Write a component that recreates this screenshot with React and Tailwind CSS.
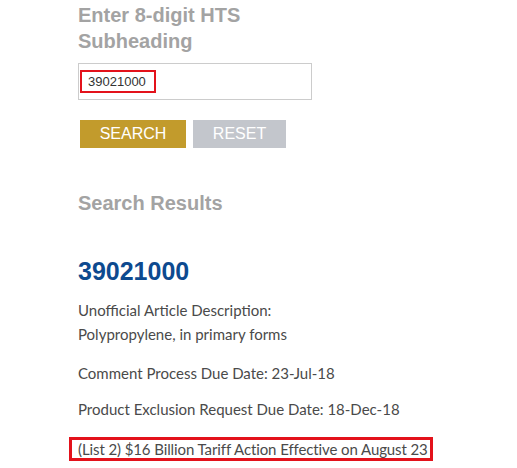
export default function App() {
    const body = "font-['Lato','Liberation_Sans',sans-serif] text-[15px] text-[#4a4a4a]";

    return (
        <div className="min-h-[468px] w-[517px] bg-white pl-[78px] pt-[2px]">
            <div className="w-[234px]">
                <h2 className="font-['Liberation_Sans',Arial,sans-serif] text-[20px] font-bold leading-[26px] text-[#a3a3a3]">
                    Enter 8-digit HTS Subheading
                </h2>
                <div className="mt-[9px] flex h-[37px] items-center border border-[#cccccc] bg-white">
                    <span className="ml-[1px] flex h-[23px] w-[76px] items-center border-2 border-[#e3121b] pl-[6px] font-['Liberation_Sans',Arial,sans-serif] text-[13px] text-[#333]">
                        39021000
                    </span>
                </div>
            </div>

            <div className="mt-[20px] flex gap-[7px] pl-[2px]">
                <button className="h-[28px] w-[106px] bg-[#c29b2c] font-['Liberation_Sans',Arial,sans-serif] text-[16px] text-white">
                    SEARCH
                </button>
                <button className="h-[28px] w-[93px] bg-[#c3c6cc] font-['Liberation_Sans',Arial,sans-serif] text-[16px] text-white">
                    RESET
                </button>
            </div>

            <h3 className="mt-[43px] font-['Liberation_Sans',Arial,sans-serif] text-[20px] font-bold leading-[24px] text-[#a3a3a3]">
                Search Results
            </h3>

            <h1 className="mt-[41px] font-['Liberation_Sans',Arial,sans-serif] text-[25px] font-bold leading-[30px] text-[#0d4a8f]">
                39021000
            </h1>

            <div className={`mt-[12px] leading-[24px] ${body}`}>
                <p>Unofficial Article Description:</p>
                <p>Polypropylene, in primary forms</p>
            </div>
            <p className={`mt-[15px] leading-[24px] ${body}`}>
                Comment Process Due Date: 23-Jul-18
            </p>
            <p className={`mt-[12px] leading-[24px] ${body}`}>
                Product Exclusion Request Due Date: 18-Dec-18
            </p>
            <div className="-ml-[9px] mt-[16px] inline-block border-[3px] border-[#e3121b] pl-[6px] pr-[2px]">
                <p className={`leading-[18px] tracking-[-0.1px] ${body}`}>
                    (List 2) $16 Billion Tariff Action Effective on August 23
                </p>
            </div>
        </div>
    );
}
